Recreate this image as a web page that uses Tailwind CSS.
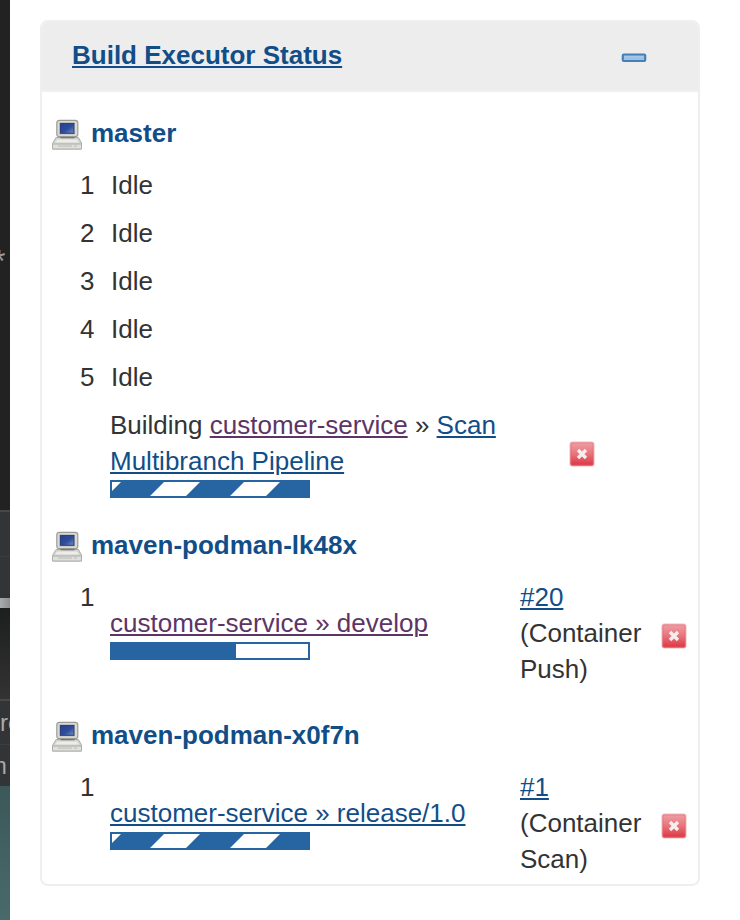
<!DOCTYPE html>
<html lang="en">
<head>
<meta charset="utf-8">
<title>Build Executor Status</title>
<script src="https://cdn.jsdelivr.net/npm/@tailwindcss/browser@4"></script>
</head>
<body class="bg-white">
<svg class="absolute h-0 w-0" aria-hidden="true">
  <defs>
    <linearGradient id="scr" x1="0" y1="0" x2="1" y2="1"><stop offset="0" stop-color="#27418c"/><stop offset=".55" stop-color="#2f4d9e"/><stop offset="1" stop-color="#6f92c8"/></linearGradient>
    <linearGradient id="red" x1="0" y1="0" x2="0" y2="1"><stop offset="0" stop-color="#efa0a6"/><stop offset=".5" stop-color="#e8737c"/><stop offset="1" stop-color="#dc3340"/></linearGradient>
    <symbol id="computer" viewBox="0 0 30 32">
      <path d="M4 18.5h22.5l3 5.5v6H.5v-5.500z" fill="#d2d2cd" stroke="#b0b0ab"/>
      <path d="M.5 25h29v5H.5z" fill="#dfdfdb" stroke="#aeaeaa"/>
      <path d="M5 20.500h20l2 3H3z" fill="#ecece9"/>
      <path d="M6 27h14m2 0h3" stroke="#c8c8c4" stroke-width="1.5"/>
      <path d="M7 17h17l-2 2.300H9z" fill="#6d6d6b"/>
      <rect x="4.800" y="1.300" width="21" height="16.400" rx="2.500" fill="#d9d9d5" stroke="#9b9b98" stroke-width="1.200"/>
      <rect x="7.300" y="3.500" width="15.700" height="11.800" rx=".5" fill="#a5a6a2"/>
      <rect x="8.500" y="4.500" width="13.300" height="9.800" fill="url(#scr)" stroke="#2b3f7c"/>
    </symbol>
    <symbol id="stop" viewBox="0 0 26 26">
      <rect x="1" y="1" width="24" height="24" rx="2" fill="url(#red)" stroke="#f0b9bd"/>
      <rect x="2" y="2" width="22" height="22" rx="1" fill="none" stroke="#df636d" stroke-opacity=".5"/>
      <path d="M9 9l8 8M17 9l-8 8" stroke="#f5eeee" stroke-width="3.400"/>
    </symbol>
    <symbol id="stripes" viewBox="0 0 196 14">
      <path d="M0 0h196v14H0z" fill="#2665a1"/>
      <path d="M0 0h9L0 9zM38 14L52 0h36L74 14zM118 14l14-14h36l-14 14z" fill="#fff"/>
    </symbol>
  </defs>
</svg>
<div class="flex h-[920px] w-[740px] overflow-hidden font-['Liberation_Sans',Arial,sans-serif] text-[26px] leading-9 text-[#333]">
  <aside class="flex h-full w-[10px] shrink-0 flex-col overflow-hidden whitespace-nowrap text-[#aaa]">
    <div class="relative h-[510px] bg-[#222]"><span class="absolute -left-[7px] top-[243px] text-[32px] leading-9 text-[#969ba3]">*</span></div>
    <div class="h-[46px] border-t-2 border-[#464749] bg-[#333436]"></div>
    <div class="h-[42px] border-t border-[#3c3d3f] bg-[#333436]"></div>
    <div class="h-[10px] bg-gradient-to-r from-[#aaabad] to-[#8d8e90]"></div>
    <div class="h-[91px] bg-gradient-to-b from-[#1d1e1e] to-[#323332]"></div>
    <div class="flex h-[45px] items-center border-t-2 border-[#494949] bg-[#333436] text-[24px]">re</div>
    <div class="relative h-[42px] border-t border-[#3c3d3f] bg-[#333436]"><span class="absolute -left-[6px] top-[3px] text-[23px]">n</span></div>
    <div class="flex-1 bg-gradient-to-b from-[#3c5859] to-[#486a6b]"></div>
  </aside>
  <main class="pl-[30px] pt-[20px]">
    <section class="h-[866px] w-[660px] overflow-hidden rounded-[8px] border-2 border-[#efefef]">
      <header class="flex h-[70px] items-start justify-between border-b-2 border-[#f0f0f0] bg-[#ededed] pl-[30px] pr-[51px] pt-[15px]">
        <a class="font-bold text-[#114e88] underline decoration-2 underline-offset-[2px]">Build Executor Status</a>
        <svg class="mt-[15px] h-[11px] w-[26px]" viewBox="0 0 26 11"><rect x="1.800" y="2.500" width="22.400" height="6.500" rx="1" fill="#9dc2e2" stroke="#4580b8" stroke-width="2.200"/><path d="M4 4.500h18" stroke="#a9cae6"/></svg>
      </header>

      <div class="flex h-[69px] gap-[9px] pl-[10px] pt-[23px]">
        <svg class="mt-[4px] h-8 w-[30px]"><use href="#computer"/></svg>
        <b class="text-[#114e88]">master</b>
      </div>
      <div class="flex h-12 items-center gap-[17px] pl-[38px]"><span class="w-[14px]">1</span><span>Idle</span></div>
      <div class="flex h-12 items-center gap-[17px] pl-[38px]"><span class="w-[14px]">2</span><span>Idle</span></div>
      <div class="flex h-12 items-center gap-[17px] pl-[38px]"><span class="w-[14px]">3</span><span>Idle</span></div>
      <div class="flex h-12 items-center gap-[17px] pl-[38px]"><span class="w-[14px]">4</span><span>Idle</span></div>
      <div class="flex h-12 items-center gap-[17px] pl-[38px]"><span class="w-[14px]">5</span><span>Idle</span></div>
      <div class="flex h-[103px] pl-[68px] pt-[6px]">
        <div class="w-[459px]">
          <p class="whitespace-nowrap">Building <a class="text-[#5c3566] underline decoration-2 underline-offset-[2px]">customer-service</a> » <a class="text-[#114e88] underline decoration-2 underline-offset-[2px]">Scan<br>Multibranch Pipeline</a></p>
          <div class="mt-px h-[18px] w-[200px] border-2 border-[#2665a1]"><svg class="h-[14px] w-[196px]"><use href="#stripes"/></svg></div>
        </div>
        <svg class="mt-[34px] h-[26px] w-[26px]"><use href="#stop"/></svg>
      </div>

      <div class="flex h-[69px] gap-[9px] pl-[10px] pt-[23px]">
        <svg class="mt-[4px] h-8 w-[30px]"><use href="#computer"/></svg>
        <b class="text-[#114e88]">maven-podman-lk48x</b>
      </div>
      <div class="flex h-[121px] pl-[38px] pt-[6px]">
        <span class="w-[30px]">1</span>
        <div class="w-[410px] pt-[26px]">
          <a class="block whitespace-nowrap text-[#5c3566] underline decoration-2 underline-offset-[2px]">customer-service » develop</a>
          <div class="mt-px h-[18px] w-[200px] border-2 border-[#2665a1]"><div class="h-full bg-[#2665a1]" style="width:63.3%"></div></div>
        </div>
        <div class="w-[141px]"><a class="text-[#114e88] underline decoration-2 underline-offset-[2px]">#20</a><br>(Container<br>Push)</div>
        <svg class="mt-[44px] h-[26px] w-[26px] shrink-0"><use href="#stop"/></svg>
      </div>

      <div class="flex h-[69px] gap-[9px] pl-[10px] pt-[23px]">
        <svg class="mt-[4px] h-8 w-[30px]"><use href="#computer"/></svg>
        <b class="text-[#114e88]">maven-podman-x0f7n</b>
      </div>
      <div class="flex h-[121px] pl-[38px] pt-[6px]">
        <span class="w-[30px]">1</span>
        <div class="w-[410px] pt-[26px]">
          <a class="block whitespace-nowrap text-[#114e88] underline decoration-2 underline-offset-[2px]">customer-service » release/1.0</a>
          <div class="mt-px h-[18px] w-[200px] border-2 border-[#2665a1]"><svg class="h-[14px] w-[196px]"><use href="#stripes"/></svg></div>
        </div>
        <div class="w-[141px]"><a class="text-[#114e88] underline decoration-2 underline-offset-[2px]">#1</a><br>(Container<br>Scan)</div>
        <svg class="mt-[44px] h-[26px] w-[26px] shrink-0"><use href="#stop"/></svg>
      </div>
    </section>
  </main>
</div>
</body>
</html>
